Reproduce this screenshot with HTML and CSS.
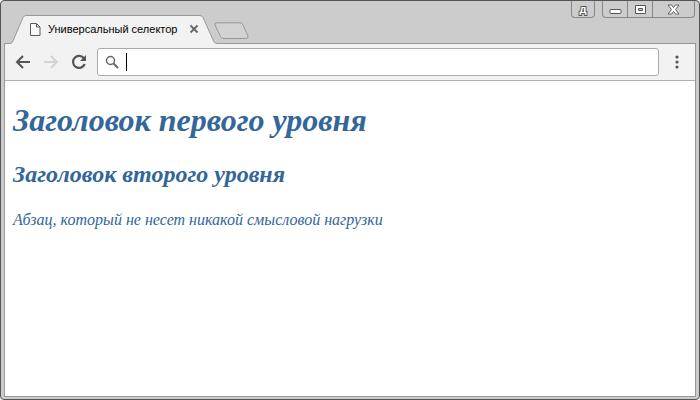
FILE: index.html
```html
<!DOCTYPE html>
<html lang="ru">
<head>
  <meta charset="UTF-8">
  <meta name="viewport" content="width=device-width, initial-scale=1.0">
  <title>Универсальный селектор</title>
  <link rel="stylesheet" href="styles.css">
</head>
<body>
  <div class="window">

    <header class="tabs">
      <div class="tab">
        <svg class="tab-shape" width="208" height="30" viewBox="0 0 208 30">
          <path d="M0 30 V28.5 Q2 28.5 3 26 L13 2.500 Q14 .5 16 .5 H190 Q192 .5 193 2.500 L204 27 Q205 28.500 208 28.500 V30 Z" fill="#f2f2f2"/>
          <path d="M0 28.5 Q2 28.5 3 26 L13 2.500 Q14 .5 16 .5 H190 Q192 .5 193 2.500 L204 27 Q205 28.500 208 28.500" fill="none" stroke="#999"/>
        </svg>
        <svg class="tab-icon" width="12" height="15" viewBox="0 0 12 15">
          <path d="M1.500 1.500 H7.500 L11 5 V13.500 H1.500 Z" fill="#f8f8f8" stroke="#5a5a5a"/>
          <path d="M7.500 1.500 V5 H11" fill="none" stroke="#5a5a5a"/>
        </svg>
        <span class="tab-title">Универсальный селектор</span>
        <button type="button" class="tab-close" aria-label="Закрыть вкладку">
          <svg width="10" height="10" viewBox="0 0 10 10"><path d="M1.500 1.500 L8.500 8.500 M8.500 1.500 L1.500 8.500" stroke="#666" stroke-width="1.800"/></svg>
        </button>
      </div>
      <button type="button" class="new-tab" aria-label="Новая вкладка">
        <svg width="36" height="18" viewBox="0 0 36 18"><path d="M3 .8 H26 Q28 .8 29 3 L34 14 Q34.500 16.500 32 16.500 H9 Q7.500 16.500 6.500 14.500 L1 3 Q.5 .8 3 .8 Z" fill="#d2d2d2" stroke="#999"/></svg>
      </button>

      <div class="controls">
        <button type="button" class="user">д</button>
        <div class="group">
          <button type="button" aria-label="Свернуть">
            <svg width="13" height="11" viewBox="0 0 13 11"><rect x="1" y="5.500" width="11" height="4" rx="1" fill="#fff" stroke="#555"/></svg>
          </button>
          <button type="button" aria-label="Развернуть">
            <svg width="13" height="11" viewBox="0 0 13 11"><path d="M1.500 1.500 H11.500 V9.500 H1.500 Z M4.500 4.500 V6.500 H8.500 V4.500 Z" fill="#fff" fill-rule="evenodd" stroke="#555"/></svg>
          </button>
          <button type="button" class="close" aria-label="Закрыть">
            <svg width="13" height="11" viewBox="0 0 13 11"><path d="M1 1 H4.500 L6.500 3.500 L8.500 1 H12 L8.500 5.500 L12 10 H8.500 L6.500 7.500 L4.500 10 H1 L4.500 5.500 Z" fill="#fff" stroke="#555" stroke-width=".9"/></svg>
          </button>
        </div>
      </div>
    </header>

    <div class="view">
      <nav class="toolbar">
        <button type="button" aria-label="Назад">
          <svg width="16" height="16" viewBox="0 0 16 16"><path d="M15 8 H2.500 M8 2 L2 8 L8 14" fill="none" stroke="#555" stroke-width="2"/></svg>
        </button>
        <button type="button" aria-label="Вперёд" disabled>
          <svg width="16" height="16" viewBox="0 0 16 16"><path d="M1 8 H13.500 M8 2 L14 8 L8 14" fill="none" stroke="#d3d3d3" stroke-width="2"/></svg>
        </button>
        <button type="button" aria-label="Обновить">
          <svg width="16" height="16" viewBox="0 0 16 16"><path d="M13 4.500 A6 6 0 1 0 13.700 10" fill="none" stroke="#555" stroke-width="2.200"/><path d="M15 1 V7 H9 Z" fill="#555"/></svg>
        </button>
        <label class="address">
          <svg width="14" height="14" viewBox="0 0 14 14"><circle cx="5.500" cy="5.500" r="4" fill="none" stroke="#666" stroke-width="1.500"/><path d="M8.500 8.500 L13 13" stroke="#666" stroke-width="2"/></svg>
          <span class="caret"></span>
          <input type="text" aria-label="Адрес">
        </label>
        <button type="button" class="menu" aria-label="Меню">
          <svg width="4" height="14" viewBox="0 0 4 14" fill="#555"><circle cx="2" cy="2" r="1.600"/><circle cx="2" cy="7" r="1.600"/><circle cx="2" cy="12" r="1.600"/></svg>
        </button>
      </nav>

      <main class="page">
        <h1>Заголовок первого уровня</h1>
        <h2>Заголовок второго уровня</h2>
        <p>Абзац, который не несет никакой смысловой нагрузки</p>
      </main>
    </div>

  </div>
</body>
</html>
```
FILE: styles.css
```css
* {
  box-sizing: border-box;
}
body {
  margin: 0;
  background: #fff;
  font-family: "Liberation Sans", Arial, sans-serif;
}
button {
  display: flex;
  align-items: center;
  justify-content: center;
  padding: 0;
  border: none;
  background: none;
}
svg {
  display: block;
  flex: none;
}
.window {
  display: flex;
  flex-direction: column;
  min-height: 100vh;
  padding: 0 3px 2px;
  border: 1px solid #555;
  border-radius: 4px;
  background: #ccc;
}

/* tab strip */
.tabs {
  display: flex;
  height: 42px;
  padding: 0 1px 0 6px;
}
.tab {
  position: relative;
  display: flex;
  align-items: center;
  width: 208px;
  height: 28px;
  margin-top: 14px;
  padding-left: 19px;
}
.tab-shape {
  position: absolute;
  top: 0;
  left: 0;
  z-index: 1;
}
.tab-icon,
.tab-title,
.tab-close {
  position: relative;
  z-index: 2;
}
.tab-title {
  flex: 1;
  margin-left: 7px;
  font-size: 11px;
  line-height: 14px;
  white-space: nowrap;
  color: #000;
}
.tab-close {
  margin-right: 19px;
}
.new-tab {
  height: 18px;
  margin-top: 21px;
  margin-left: -4px;
}
.controls {
  display: flex;
  gap: 7px;
  height: 17px;
  margin-left: auto;
}
.user,
.group {
  border: 1px solid #888;
  border-top: none;
  border-radius: 0 0 4px 4px;
}
.user {
  width: 24px;
  font-size: 11px;
  line-height: 14px;
  font-weight: bold;
  color: #fff;
  -webkit-text-stroke: 2px #555;
  paint-order: stroke fill;
}
.group {
  display: flex;
}
.group button {
  width: 25px;
  border-right: 1px solid #888;
}
.group .close {
  width: 41px;
  border-right: none;
}

/* toolbar */
.view {
  display: flex;
  flex: 1;
  flex-direction: column;
  border: 1px solid #999;
  background: #fff;
}
.toolbar {
  display: flex;
  align-items: center;
  gap: 12px;
  height: 37px;
  padding: 0 16px 0 10px;
  border-bottom: 1px solid #b0b0b0;
  background: #f2f2f2;
}
.address {
  display: flex;
  flex: 1;
  align-items: center;
  height: 28px;
  margin-left: -2px;
  padding: 0 7px;
  border: 1px solid #aaa;
  border-radius: 3px;
  background: #fff;
}
.caret {
  width: 1px;
  height: 18px;
  margin-left: 7px;
  background: #000;
}
.address input {
  flex: 1;
  min-width: 0;
  padding: 0;
  border: none;
  outline: none;
  background: none;
  font-size: 14px;
}
.menu {
  margin-left: 4px;
}

/* page */
.page {
  padding: 0 8px;
  font-family: "Liberation Serif", "Times New Roman", serif;
  font-style: italic;
  color: #369;
}
h1 {
  margin: 21px 0;
  font-size: 32px;
  line-height: 37px;
}
h2 {
  margin: 21px 0;
  font-size: 24px;
  line-height: 28px;
}
p {
  margin: 22px 0;
  font-size: 16px;
  line-height: 20px;
}
```
